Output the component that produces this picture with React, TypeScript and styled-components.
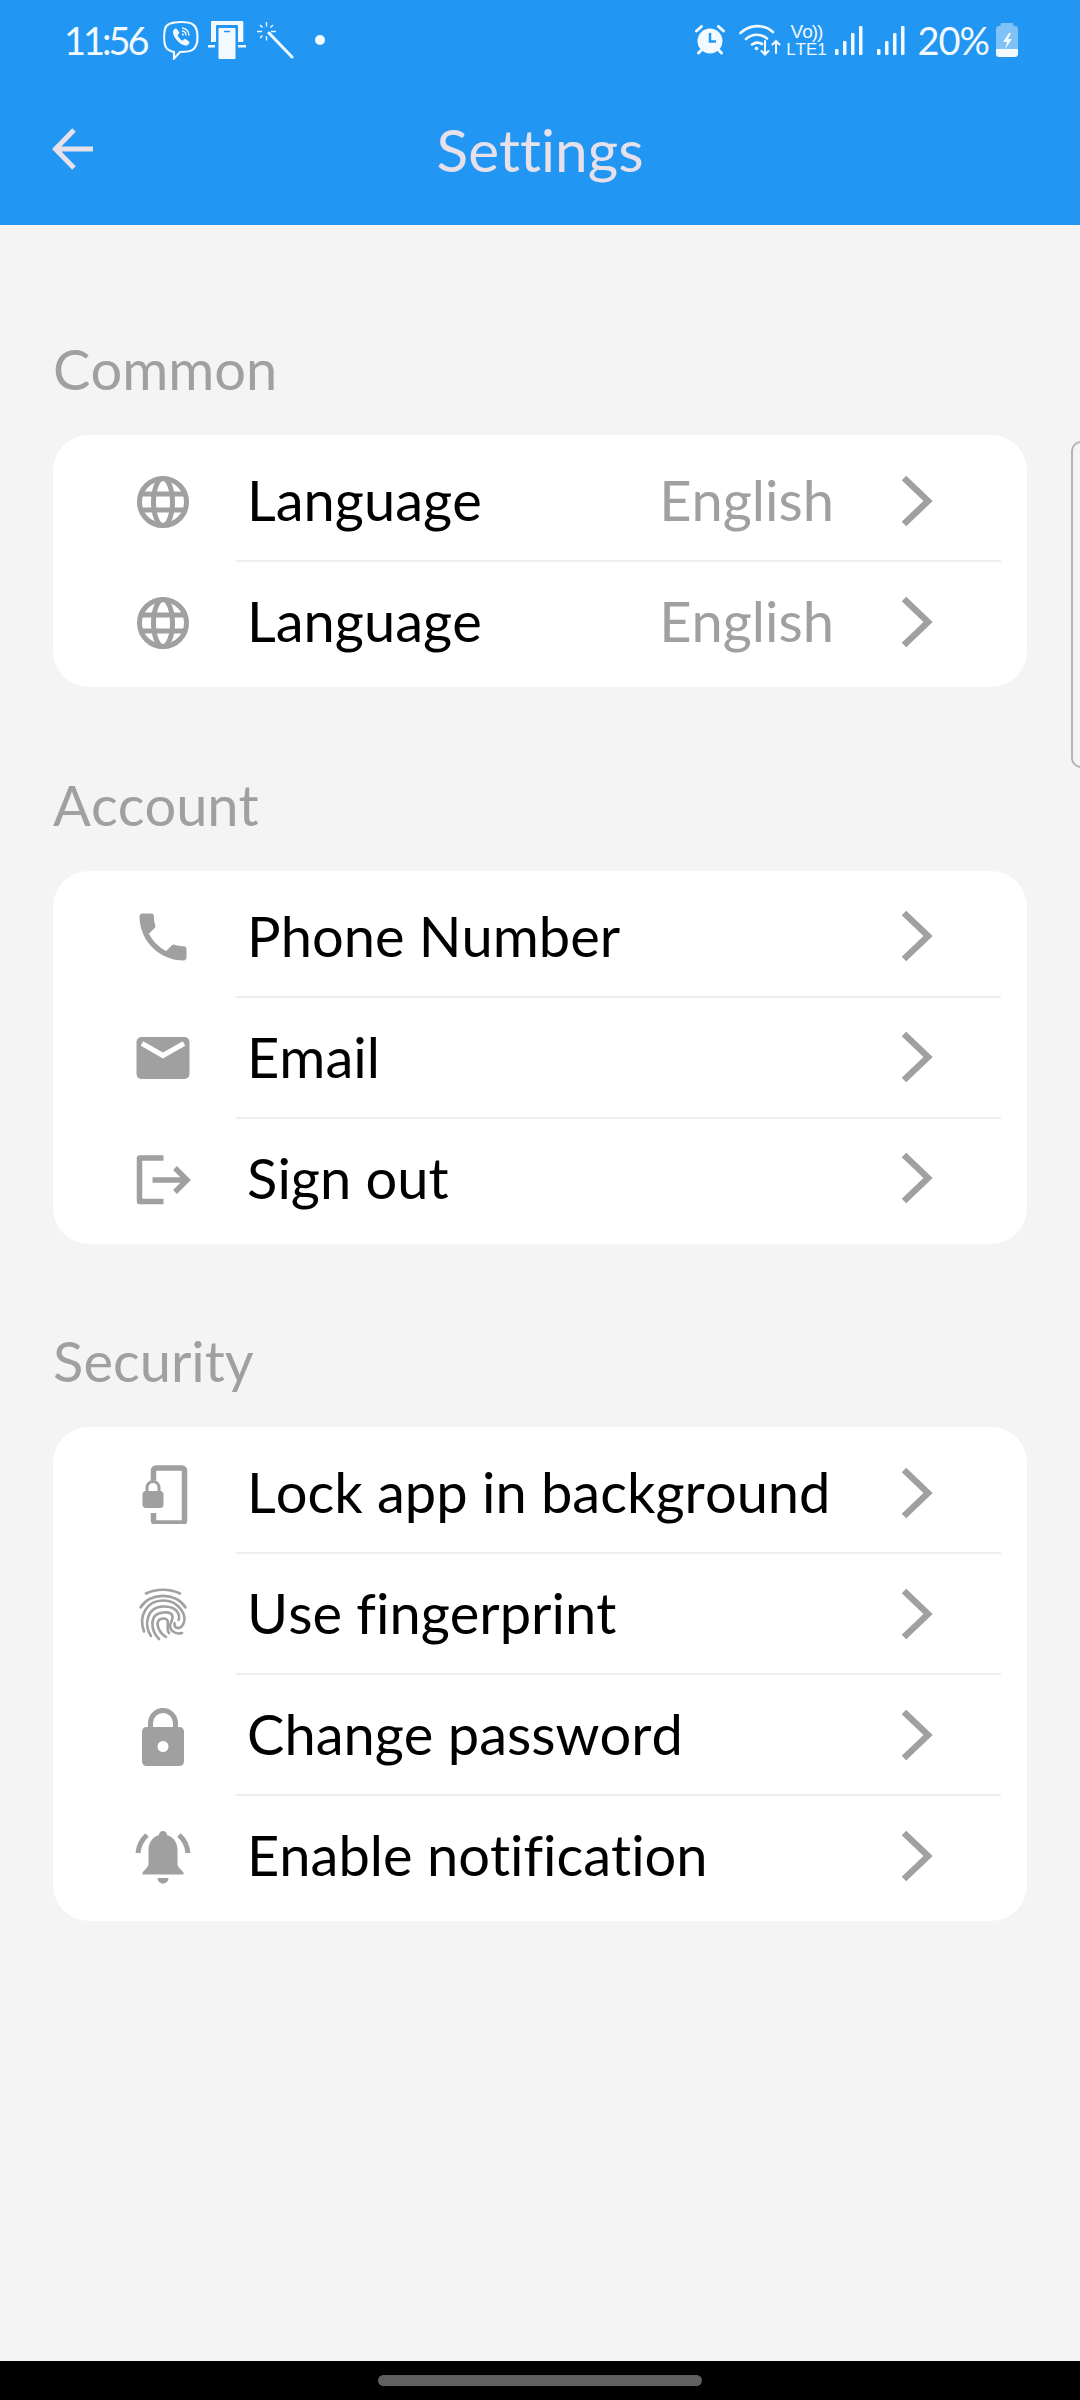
import React from 'react';
import styled, { createGlobalStyle } from 'styled-components';

const GlobalStyle = createGlobalStyle`
    html, body {
        margin: 0;
        padding: 0;
        background: #f4f4f4;
    }
    body {
        font-family: Lato, "Liberation Sans", sans-serif;
        font-variant-ligatures: none;
        font-kerning: none;
    }
`;

const Page = styled.div`
    width: 1080px;
    height: 2400px;
    display: flex;
    flex-direction: column;
    overflow: hidden;
    background: #f4f4f4;
`;

const Header = styled.header`
    height: 225px;
    flex: none;
    background: #2196f3;
    display: flex;
    flex-direction: column;
`;

const StatusBar = styled.div`
    height: 80px;
    display: flex;
    align-items: center;
    padding: 0 62px 0 64px;
    color: #f2f9ff;
`;

const StatusText = styled.span<{ $spacing: number }>`
    font-size: 38px;
    font-weight: 400;
    line-height: 40px;
    letter-spacing: ${(p) => p.$spacing}px;
`;

const StatusSlot = styled.div<{ $left: number }>`
    margin-left: ${(p) => p.$left}px;
    flex: none;
`;

const Spacer = styled.div`
    flex: 1;
`;

const NetworkLabel = styled.div`
    width: 40px;
    display: flex;
    flex-direction: column;
    align-items: center;
    font-family: "Liberation Sans", sans-serif;
    line-height: 1;
    color: #f2f9ff;
`;

const VoText = styled.span`
    font-size: 19px;
    letter-spacing: -1px;
    height: 18px;
    line-height: 18px;
`;

const LteText = styled.span`
    font-size: 17px;
`;

const TitleBar = styled.div`
    flex: 1;
    display: flex;
    align-items: center;
    padding: 0 0 8px 52px;
    position: relative;
`;

const Title = styled.h1`
    position: absolute;
    left: 0;
    right: 0;
    top: 0;
    bottom: 8px;
    margin: 0;
    display: flex;
    align-items: center;
    justify-content: center;
    font-size: 58.5px;
    font-weight: 400;
    color: #e6e0ea;
`;

const Content = styled.main`
    flex: 1;
    position: relative;
    padding: 114px 53px 0;
`;

const Section = styled.section`
    & + & {
        margin-top: 87.5px;
    }
`;

const SectionLabel = styled.h2`
    margin: 0 0 35px;
    font-size: 56px;
    line-height: 60px;
    font-weight: 400;
    color: #a0a0a0;
    padding-bottom: 1px;
`;

const Card = styled.div`
    background: #fff;
    border-radius: 36px;
    padding: 6px 0 4px;
`;

const Row = styled.div`
    height: 121px;
    display: flex;
    align-items: stretch;
`;

const IconCell = styled.div`
    width: 183px;
    flex: none;
    padding-left: 80px;
    box-sizing: border-box;
    display: flex;
    align-items: center;
`;

const RowBody = styled.div<{ $last?: boolean }>`
    flex: 1;
    margin-right: 26px;
    padding: 0 68px 0 12px;
    display: flex;
    align-items: center;
    border-bottom: 2px solid ${(p) => (p.$last ? 'transparent' : '#eeeeee')};
`;

const RowLabel = styled.span`
    flex: 1;
    margin-left: -1px;
    padding-bottom: 2px;
    font-size: 56px;
    color: #000;
`;

const RowValue = styled.span`
    padding-bottom: 2px;
    font-size: 56px;
    color: #a0a0a0;
    margin-right: 67px;
`;

const ScrollEdge = styled.div`
    position: absolute;
    left: 1071px;
    top: 216px;
    width: 30px;
    height: 327px;
    border: 2px solid #b4b4b4;
    border-radius: 10px;
    box-sizing: border-box;
`;

const NavBar = styled.div`
    height: 39px;
    flex: none;
    background: #000;
    display: flex;
    justify-content: center;
    padding-top: 14px;
    box-sizing: border-box;
`;

const NavHandle = styled.div`
    width: 324px;
    height: 11px;
    border-radius: 6px;
    background: #606060;
`;

const Glyph = styled.svg`
    width: 60px;
    height: 60px;
    flex: none;
    display: block;
`;

const GRAY = '#a0a0a0';

const GlobeIcon = () => (
    <Glyph viewBox="0 0 60 60" fill="none" stroke={GRAY} strokeWidth="5">
        <circle cx="30" cy="30" r="23.5" />
        <ellipse cx="30" cy="30" rx="9.500" ry="23.500" />
        <path d="M6 22h48M6 38h48" />
    </Glyph>
);

const PhoneIcon = () => (
    <Glyph viewBox="0.500 0.500 23 23" fill={GRAY}>
        <path d="M6.620 10.790c1.440 2.830 3.760 5.140 6.590 6.590l2.200-2.200c.270-.270.670-.360 1.020-.240 1.120.370 2.330.570 3.570.570.550 0 1 .450 1 1V20c0 .550-.450 1-1 1-9.390 0-17-7.610-17-17 0-.550.450-1 1-1h3.500c.550 0 1 .450 1 1 0 1.250.200 2.450.570 3.570.110.350.030.740-.250 1.020l-2.200 2.200z" />
    </Glyph>
);

const MailIcon = () => (
    <Glyph viewBox="0 0 60 60">
        <rect x="3.500" y="9" width="53" height="42" rx="5" fill={GRAY} />
        <path d="M9 15.500 30 27.500 51 15.500" fill="none" stroke="#fff" strokeWidth="5" />
    </Glyph>
);

const SignOutIcon = () => (
    <Glyph viewBox="0 0 60 60" fill="none" stroke={GRAY} strokeWidth="5.500">
        <path d="M30.500 9H6.500v43.500h24" strokeLinejoin="round" />
        <path d="M19.500 31h34M42 19l12 12-12 12" />
    </Glyph>
);

const LockPhoneIcon = () => (
    <Glyph viewBox="0 0 60 60">
        <path d="M20.500 16.500V6.500c0-1.400 1-2.500 2.500-2.500h26c1.400 0 2.500 1.100 2.500 2.500v50c0 1.400-1.100 2.500-2.500 2.500h-26c-1.500 0-2.500-1.100-2.500-2.500V49" fill="none" stroke={GRAY} strokeWidth="5.500" />
        <rect x="9.500" y="27" width="21" height="17" rx="3.500" fill={GRAY} />
        <path d="M14 28v-4.500a6 6 0 0 1 12 0V28" fill="none" stroke={GRAY} strokeWidth="3" />
    </Glyph>
);

const FingerprintIcon = () => (
    <Glyph viewBox="0 0 60 60" fill="none" stroke={GRAY} strokeWidth="2.600" strokeLinecap="round">
        <path d="M13 8.500C23 3.500 37 3.500 47 8.500" />
        <path d="M7.500 22.500C17 7 43 7 52.500 22.500" />
        <path d="M11 46.500C5 31 14 15.500 30 15.500S55 31 50 39.500C47 45 41 44 41.500 38" />
        <path d="M18 51C11 41 13 22 30 21.500S47 33 45.500 35" />
        <path d="M26 54C18 46 15 29 30 27.500S38 37 37 40C37 46 43 50 49 48" />
        <path d="M33 52C24 46 21 34 30 33.500S32 44 36 48" />
    </Glyph>
);

const LockIcon = () => (
    <Glyph viewBox="0 0 60 60">
        <path d="M17.500 22v-6a12.500 12.500 0 0 1 25 0v6" fill="none" stroke={GRAY} strokeWidth="5" transform="translate(0 1)" />
        <path fillRule="evenodd" fill={GRAY} d="M13.500 21h33a4.500 4.500 0 0 1 4.500 4.500v30a4.500 4.500 0 0 1-4.500 4.500h-33A4.500 4.500 0 0 1 9 55.500v-30A4.500 4.500 0 0 1 13.500 21zM30 35a5.500 5.500 0 1 0 0 11 5.500 5.500 0 0 0 0-11z" />
    </Glyph>
);

const BellIcon = () => (
    <Glyph viewBox="0 0 60 60">
        <path fill={GRAY} d="M30 4c2.500 0 4 1.800 4 4 7 2 10.500 8 10.500 15v14c0 3 3 5 6 8.500v2H9.500v-2c3-3.500 6-5.500 6-8.500V23c0-7 3.500-13 10.500-15 0-2.200 1.500-4 4-4z" />
        <path fill={GRAY} d="M24.500 51h11c0 3-2.500 5.500-5.500 5.500S24.500 54 24.500 51z" />
        <path d="M5 26c.500-7 3.500-13 9-18M55 26c-.500-7-3.500-13-9-18" fill="none" stroke={GRAY} strokeWidth="5" />
    </Glyph>
);

const ChevronIcon = () => (
    <svg width="32" height="52" viewBox="0 0 32 52" fill="none" stroke={GRAY} strokeWidth="6.500">
        <path d="M3 3 27 26 3 49" />
    </svg>
);

const BackIcon = () => (
    <svg width="42" height="42" viewBox="0 0 42 42" fill="none" stroke="#e6e0ea" strokeWidth="5">
        <path d="M41 21H4M22 2 3.500 21 22 40" />
    </svg>
);

const StatusSvg = styled.svg`
    display: block;
    flex: none;
`;

const ViberIcon = () => (
    <StatusSvg width="36" height="40" viewBox="0 0 36 40" fill="none" stroke="#f2f9ff">
        <path strokeWidth="2.200" d="M18 2c5 0 9 0 12 2.500C33.500 7 34.500 11 34.500 17s-1 10-4.500 12.500C27 32 23 32 17 32l-6 6.500V32C6 31 3 29 2 25 1 21 1 13 2 9c1-5 6-7 16-7z" />
        <path fill="#f2f9ff" stroke="none" d="M11.500 9c1-.700 2-.500 2.500.300l2 2.800c.500.800.300 1.600-.500 2.200l-1 .800c.800 2.400 2.800 4.600 5.200 5.600l1-1.100c.600-.700 1.500-.800 2.200-.300l2.800 2c.800.600.900 1.600.300 2.400-1 1.400-2.500 2.200-4 1.800-6-1.800-10.500-6.500-12-12.500-.300-1.500.500-3 1.500-4z" />
        <path strokeWidth="1.400" d="M19 8c4 .300 7 3.300 7 7.500M19 11c2.500.200 4 2 4 4.500M19 14c1 .100 1.400.700 1.400 1.500" />
    </StatusSvg>
);

const DeviceIcon = () => (
    <StatusSvg width="38" height="38" viewBox="0 0 38 38" fill="#f2f9ff">
        <path d="M4 0h30c.800 0 1.300.500 1.300 1.300V21H3V1.300C3 .500 3.300 0 4 0z" />
        <path d="M0 24h7v2.500H0zM28 24h10v2.500H28z" />
        <rect x="8" y="4" width="22" height="34" rx="1" fill="#2196f3" />
        <rect x="10.500" y="7" width="17" height="31" rx="1" />
        <path d="M16 10.500h6" stroke="#2196f3" strokeWidth="1.500" />
    </StatusSvg>
);

const WandIcon = () => (
    <StatusSvg width="38" height="38" viewBox="0 0 38 38" fill="none" stroke="#f2f9ff">
        <path d="M13 12 36 36" strokeWidth="3" strokeLinecap="round" />
        <path d="M10.500 1v4.500M10.500 15v4.500M1 10.500h5M15 10.500h5M4 4l2.500 2.500M17 4l-2.500 2.500M4 17l2.500-2.500" strokeWidth="1.400" />
    </StatusSvg>
);

const Dot = styled.div`
    width: 10px;
    height: 10px;
    border-radius: 50%;
    background: #f2f9ff;
`;

const AlarmIcon = () => (
    <StatusSvg width="30" height="30" viewBox="0 0 30 30">
        <circle cx="15" cy="16" r="12.500" fill="#f2f9ff" />
        <path d="M15 8v8.500h6" fill="none" stroke="#2196f3" strokeWidth="2.500" />
        <path d="M1.500 6 6.500 1.500M28.500 6l-5-4.500M3.500 28l3-3M26.500 28l-3-3" stroke="#f2f9ff" strokeWidth="3" strokeLinecap="round" />
    </StatusSvg>
);

const WifiIcon = () => (
    <StatusSvg width="42" height="32" viewBox="0 0 42 32" fill="none" stroke="#f2f9ff" strokeWidth="2.600" strokeLinecap="round">
        <path d="M1.500 9C11 0 25 0 34 8M7 15c6.500-5.500 15-5.500 21-.500M13 20.500c3.500-2.500 6.500-2.500 10-.500" />
        <circle cx="17.500" cy="24.500" r="1.800" fill="#f2f9ff" stroke="none" />
        <path strokeWidth="2" d="M26 17v13M22.500 27l3.500 3.500 3.500-3.500M37 29V17M33.500 20.500 37 17l3.500 3.500" />
    </StatusSvg>
);

const SignalIcon = () => (
    <StatusSvg width="28" height="30" viewBox="0 0 28 30" fill="#f2f9ff">
        <rect x="0" y="24" width="3.500" height="6" rx="1" />
        <rect x="8" y="16" width="3.500" height="14" rx="1" />
        <rect x="16" y="8" width="3.500" height="22" rx="1" />
        <rect x="24" y="1" width="3.500" height="29" rx="1" />
    </StatusSvg>
);

const BatteryIcon = () => (
    <StatusSvg width="22" height="34" viewBox="0 0 22 34">
        <path fill="#7fc2f8" d="M6 0h10c1 0 1.500.600 1.500 1.500V3h1.500C20.800 3 22 4.200 22 6v20H0V6c0-1.800 1.200-3 3-3h1.500V1.500C4.500.600 5 0 6 0z" />
        <path fill="#f2f9ff" d="M0 26h22v5c0 1.800-1.200 3-3 3H3c-1.800 0-3-1.200-3-3z" />
        <path fill="#f2f9ff" d="M13 10 7 19h4l-2 7 7-10h-4l3-6z" />
    </StatusSvg>
);

interface IRow {
    icon: React.ReactNode;
    label: string;
    value?: string;
}

const sections: { title: string; rows: IRow[] }[] = [
    {
        title: 'Common',
        rows: [
            { icon: <GlobeIcon />, label: 'Language', value: 'English' },
            { icon: <GlobeIcon />, label: 'Language', value: 'English' },
        ],
    },
    {
        title: 'Account',
        rows: [
            { icon: <PhoneIcon />, label: 'Phone Number' },
            { icon: <MailIcon />, label: 'Email' },
            { icon: <SignOutIcon />, label: 'Sign out' },
        ],
    },
    {
        title: 'Security',
        rows: [
            { icon: <LockPhoneIcon />, label: 'Lock app in background' },
            { icon: <FingerprintIcon />, label: 'Use fingerprint' },
            { icon: <LockIcon />, label: 'Change password' },
            { icon: <BellIcon />, label: 'Enable notification' },
        ],
    },
];

export default function App() {
    return (
        <Page>
            <GlobalStyle />
            <Header>
                <StatusBar>
                    <StatusText $spacing={-3}>11:56</StatusText>
                    <StatusSlot $left={16}><ViberIcon /></StatusSlot>
                    <StatusSlot $left={9}><DeviceIcon /></StatusSlot>
                    <StatusSlot $left={10}><WandIcon /></StatusSlot>
                    <StatusSlot $left={21}><Dot /></StatusSlot>
                    <Spacer />
                    <AlarmIcon />
                    <StatusSlot $left={14}><WifiIcon /></StatusSlot>
                    <StatusSlot $left={5}>
                        <NetworkLabel>
                            <VoText>Vo))</VoText>
                            <LteText>LTE1</LteText>
                        </NetworkLabel>
                    </StatusSlot>
                    <StatusSlot $left={9}><SignalIcon /></StatusSlot>
                    <StatusSlot $left={14}><SignalIcon /></StatusSlot>
                    <StatusSlot $left={12}><StatusText $spacing={-1}>20%</StatusText></StatusSlot>
                    <StatusSlot $left={7}><BatteryIcon /></StatusSlot>
                </StatusBar>
                <TitleBar>
                    <BackIcon />
                    <Title>Settings</Title>
                </TitleBar>
            </Header>
            <Content>
                {sections.map((section) => (
                    <Section key={section.title}>
                        <SectionLabel>{section.title}</SectionLabel>
                        <Card>
                            {section.rows.map((row, i) => (
                                <Row key={i}>
                                    <IconCell>{row.icon}</IconCell>
                                    <RowBody $last={i === section.rows.length - 1}>
                                        <RowLabel>{row.label}</RowLabel>
                                        {row.value && <RowValue>{row.value}</RowValue>}
                                        <ChevronIcon />
                                    </RowBody>
                                </Row>
                            ))}
                        </Card>
                    </Section>
                ))}
                <ScrollEdge />
            </Content>
            <NavBar>
                <NavHandle />
            </NavBar>
        </Page>
    );
}
